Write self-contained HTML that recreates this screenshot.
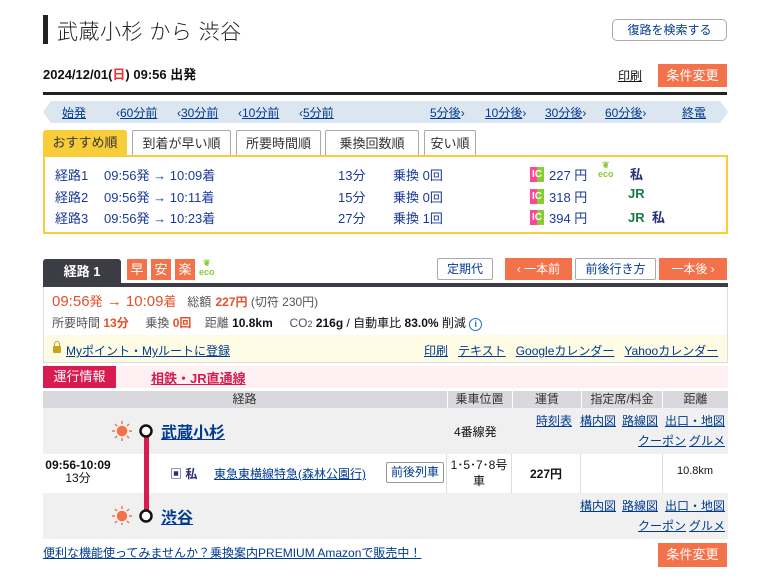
<!DOCTYPE html>
<html><head><meta charset="utf-8"><style>
*{margin:0;padding:0;box-sizing:border-box}
body{width:760px;height:584px;background:#fff;font-family:"Liberation Sans","Noto Sans CJK JP",sans-serif;font-size:12px;color:#333;position:relative;overflow:hidden}
.a{position:absolute;white-space:nowrap}
.l{color:#003b8f;text-decoration:underline}
.btn{position:absolute;border:1px solid #aaa;border-radius:2px;background:#fff;color:#003b8f;text-align:center;font-size:12px}
.ob{position:absolute;background:#f4724a;color:#fff;text-align:center;font-size:13px}
.b{color:#1a3a9a}
.n{position:absolute;top:104px;font-size:12px;color:#003b8f;white-space:nowrap}
.ic{width:14px;height:15px;background:linear-gradient(90deg,#f49 50%,#8c3 50%);color:#fff;font-size:10px;font-weight:bold;text-align:center;line-height:15px}
</style></head><body>
<div class="a" style="left:43px;top:15px;width:5px;height:29px;background:#222"></div>
<div class="a" style="left:57px;top:16px;font-size:21px;font-weight:300;color:#222;letter-spacing:0.5px">武蔵小杉 から 渋谷</div>
<div class="btn" style="left:612px;top:19px;width:115px;height:22px;line-height:20px;border-radius:5px">復路を検索する</div>
<div class="a" style="left:43px;top:64px;font-size:13px;font-weight:bold;color:#111">2024/12/01(<span style="color:#e33">日</span>) 09:56 出発</div>
<div class="a l" style="left:618px;top:67px;font-size:12px;color:#111">印刷</div>
<div class="ob" style="left:658px;top:64px;width:69px;height:23px;line-height:23px">条件変更</div>
<div class="a" style="left:43px;top:92px;width:684px;height:3px;background:#222"></div>
<svg class="a" style="left:43px;top:101px" width="685" height="22"><polygon points="8,0 677,0 685,11 677,22 8,22 0,11" fill="#dce6f0"/></svg>
<div class="n" style="left:62px"><span class="l">始発</span></div>
<div class="n" style="left:116px">‹<span class="l">60分前</span></div>
<div class="n" style="left:177px">‹<span class="l">30分前</span></div>
<div class="n" style="left:238px">‹<span class="l">10分前</span></div>
<div class="n" style="left:299px">‹<span class="l">5分前</span></div>
<div class="n" style="left:430px"><span class="l">5分後</span>›</div>
<div class="n" style="left:485px"><span class="l">10分後</span>›</div>
<div class="n" style="left:545px"><span class="l">30分後</span>›</div>
<div class="n" style="left:605px"><span class="l">60分後</span>›</div>
<div class="n" style="left:682px"><span class="l">終電</span></div>
<div class="a" style="left:43px;top:130px;width:84px;height:26px;background:#f9cc3a;border-radius:3px 3px 0 0;font-size:13px;line-height:26px;text-align:center;color:#333">おすすめ順</div>
<div class="btn" style="left:132px;top:130px;width:99px;height:26px;line-height:25px;font-size:13px;color:#333;border-bottom:none">到着が早い順</div>
<div class="btn" style="left:236px;top:130px;width:85px;height:26px;line-height:25px;font-size:13px;color:#333;border-bottom:none">所要時間順</div>
<div class="btn" style="left:325px;top:130px;width:94px;height:26px;line-height:25px;font-size:13px;color:#333;border-bottom:none">乗換回数順</div>
<div class="btn" style="left:424px;top:130px;width:52px;height:26px;line-height:25px;font-size:13px;color:#333;border-bottom:none">安い順</div>
<div class="a" style="left:43px;top:155px;width:685px;height:79px;border:2px solid #f9cc3a"></div>
<div class="a b" style="left:55px;top:165px;line-height:21.5px;font-size:13px">経路1<br>経路2<br>経路3</div>
<div class="a b" style="left:104px;top:165px;line-height:21.5px;font-size:13px">09:56発 → 10:09着<br>09:56発 → 10:11着<br>09:56発 → 10:23着</div>
<div class="a b" style="left:338px;top:165px;line-height:21.5px;font-size:13px">13分<br>15分<br>27分</div>
<div class="a b" style="left:393px;top:165px;line-height:21.5px;font-size:13px">乗換 0回<br>乗換 0回<br>乗換 1回</div>
<div class="a" style="left:530px;top:167px">
<div class="ic" style="margin:0 0 6.5px">IC</div><div class="ic" style="margin-bottom:6.5px">IC</div><div class="ic">IC</div></div>
<div class="a b" style="left:549px;top:165px;line-height:21.5px;font-size:13px">227 円<br>318 円<br>394 円</div>
<div class="a" style="left:598px;top:161px;font-size:9px;color:#8c3;font-weight:bold;line-height:9px;text-align:center">❦<br>eco</div>
<div class="a" style="left:630px;top:164px;font-weight:bold;font-size:13px;color:#2a2f7a">私</div>
<div class="a" style="left:628px;top:186px;font-weight:bold;font-size:13px;color:#1a7a4a">JR</div>
<div class="a" style="left:628px;top:207px;font-weight:bold;font-size:13px;color:#1a7a4a">JR <span style="color:#2a2f7a">&nbsp;私</span></div>
<div class="a" style="left:43px;top:259px;width:78px;height:26px;background:#3b3c44;color:#fff;font-weight:bold;font-size:13px;line-height:26px;text-align:center;border-radius:3px 3px 0 0">経路 1</div>
<div class="ob" style="left:127px;top:259px;width:20px;height:21px;line-height:21px">早</div>
<div class="ob" style="left:151px;top:259px;width:20px;height:21px;line-height:21px">安</div>
<div class="ob" style="left:175px;top:259px;width:20px;height:21px;line-height:21px">楽</div>
<div class="a" style="left:199px;top:259px;font-size:9px;color:#8c3;font-weight:bold;line-height:9px;text-align:center">❦<br>eco</div>
<div class="btn" style="left:437px;top:258px;width:56px;height:22px;line-height:20px">定期代</div>
<div class="ob" style="left:505px;top:258px;width:67px;height:22px;line-height:22px;font-size:12px">‹ 一本前</div>
<div class="btn" style="left:575px;top:258px;width:81px;height:22px;line-height:20px">前後行き方</div>
<div class="ob" style="left:659px;top:258px;width:68px;height:22px;line-height:22px;font-size:12px">一本後 ›</div>
<div class="a" style="left:43px;top:283px;width:685px;height:4px;background:#3b3c44"></div>
<div class="a" style="left:43px;top:287px;width:685px;height:76px;border:1px solid #ddd;border-top:none"></div>
<div class="a" style="left:52px;top:291px;font-size:15px;color:#e4502a">09:56<span style="font-size:13px">発</span> → 10:09<span style="font-size:13px">着</span> <span style="font-size:12px;color:#555">&nbsp;&nbsp;総額</span> <span style="font-size:12px;font-weight:bold">227円</span><span style="font-size:12px;color:#555"> (切符 230円)</span></div>
<div class="a" style="left:52px;top:314px;font-size:12px;color:#555">所要時間 <b style="color:#e4502a">13分</b>&nbsp;&nbsp;&nbsp;&nbsp;&nbsp;乗換 <b style="color:#e4502a">0回</b>&nbsp;&nbsp;&nbsp;&nbsp;距離 <b style="color:#111">10.8km</b>&nbsp;&nbsp;&nbsp;&nbsp;&nbsp;CO<span style="font-size:9px">2</span> <b style="color:#111">216g</b><span style="color:#111"> / 自動車比 <b>83.0%</b> 削減</span> <span style="display:inline-block;width:13px;height:13px;border:1.5px solid #2a6ac0;border-radius:50%;color:#2a6ac0;font-size:9px;line-height:10px;text-align:center;font-weight:bold">i</span></div>
<div class="a" style="left:44px;top:335px;width:683px;height:27px;background:#fdfbe4"></div>
<div class="a" style="left:53px;top:346px;width:8px;height:7px;background:#c9a21a;border-radius:1px"></div>
<div class="a" style="left:54px;top:341px;width:6px;height:7px;border:1.5px solid #c9a21a;border-radius:3px 3px 0 0"></div>
<div class="a" style="left:66px;top:342px;font-size:12px"><span class="l">Myポイント・Myルートに登録</span></div>
<div class="a" style="left:424px;top:342px;font-size:12px"><span class="l">印刷</span>&nbsp;&nbsp;&nbsp;<span class="l">テキスト</span>&nbsp;&nbsp;&nbsp;<span class="l">Googleカレンダー</span>&nbsp;&nbsp;&nbsp;<span class="l">Yahooカレンダー</span></div>
<div class="a" style="left:43px;top:366px;width:685px;height:22px;background:#fff1f3"></div>
<div class="a" style="left:43px;top:366px;width:73px;height:22px;background:#d81b50;color:#fff;font-size:13px;line-height:22px;text-align:center">運行情報</div>
<div class="a" style="left:151px;top:368px;font-size:13px;font-weight:bold;color:#d81b50;text-decoration:underline">相鉄・JR直通線</div>
<div class="a" style="left:43px;top:391px;width:685px;height:17px;background:#d9d9dd"></div>
<div class="a" style="left:43px;top:391px;width:403px;text-align:center;font-size:12px;line-height:17px">経路</div>
<div class="a" style="left:447px;top:391px;width:64px;text-align:center;line-height:17px;border-left:1px solid #fff">乗車位置</div>
<div class="a" style="left:512px;top:391px;width:69px;text-align:center;line-height:17px;border-left:1px solid #fff">運賃</div>
<div class="a" style="left:581px;top:391px;width:81px;text-align:center;line-height:17px;border-left:1px solid #fff">指定席/料金</div>
<div class="a" style="left:662px;top:391px;width:66px;text-align:center;line-height:17px;border-left:1px solid #fff">距離</div>
<div class="a" style="left:43px;top:408px;width:685px;height:46px;background:#f0f0f0"></div>
<div class="a" style="left:43px;top:493px;width:685px;height:46px;background:#f0f0f0"></div>
<div class="a" style="left:446px;top:454px;width:1px;height:39px;background:#ddd"></div>
<div class="a" style="left:511px;top:454px;width:1px;height:39px;background:#ddd"></div>
<div class="a" style="left:580px;top:454px;width:1px;height:39px;background:#ddd"></div>
<div class="a" style="left:662px;top:454px;width:1px;height:39px;background:#ddd"></div>
<div class="a" style="left:144px;top:430px;width:5px;height:86px;background:#d81b50"></div>
<svg class="a" style="left:110px;top:420px" width="45" height="105">
<g fill="#f4724a" stroke="#f4724a" stroke-width="1.5"><circle cx="12" cy="11" r="4.5"/><line x1="12" y1="1" x2="12" y2="4"/><line x1="12" y1="18" x2="12" y2="21"/><line x1="2" y1="11" x2="5" y2="11"/><line x1="19" y1="11" x2="22" y2="11"/><line x1="5" y1="4" x2="7" y2="6"/><line x1="17" y1="16" x2="19" y2="18"/><line x1="19" y1="4" x2="17" y2="6"/><line x1="5" y1="18" x2="7" y2="16"/></g>
<g transform="translate(0,85)" fill="#f4724a" stroke="#f4724a" stroke-width="1.5"><circle cx="12" cy="11" r="4.5"/><line x1="12" y1="1" x2="12" y2="4"/><line x1="12" y1="18" x2="12" y2="21"/><line x1="2" y1="11" x2="5" y2="11"/><line x1="19" y1="11" x2="22" y2="11"/><line x1="5" y1="4" x2="7" y2="6"/><line x1="17" y1="16" x2="19" y2="18"/><line x1="19" y1="4" x2="17" y2="6"/><line x1="5" y1="18" x2="7" y2="16"/></g>
<circle cx="36" cy="11" r="5.5" fill="#fff" stroke="#111" stroke-width="2.5"/><circle cx="36" cy="96" r="5.5" fill="#fff" stroke="#111" stroke-width="2.5"/></svg>
<div class="a" style="left:161px;top:419px;font-size:16px;font-weight:bold;color:#003b8f;text-decoration:underline">武蔵小杉</div>
<div class="a" style="left:161px;top:504px;font-size:16px;font-weight:bold;color:#003b8f;text-decoration:underline">渋谷</div>
<div class="a" style="left:454px;top:423px;font-size:12px;color:#111">4番線発</div>
<div class="a l" style="left:536px;top:412px">時刻表</div>
<div class="a l" style="left:580px;top:412px">構内図</div>
<div class="a l" style="left:622px;top:412px">路線図</div>
<div class="a l" style="left:665px;top:412px">出口・地図</div>
<div class="a l" style="left:638px;top:432px">クーポン</div>
<div class="a l" style="left:689px;top:432px">グルメ</div>
<div class="a l" style="left:580px;top:497px">構内図</div>
<div class="a l" style="left:622px;top:497px">路線図</div>
<div class="a l" style="left:665px;top:497px">出口・地図</div>
<div class="a l" style="left:638px;top:517px">クーポン</div>
<div class="a l" style="left:689px;top:517px">グルメ</div>
<div class="a" style="left:43px;top:459px;width:70px;text-align:center;font-size:12px;line-height:13px;color:#111"><b>09:56-10:09</b><br>13分</div>
<div class="a" style="left:170px;top:465px;font-size:12px;font-weight:bold;color:#2a2f7a">▣ 私</div>
<div class="a" style="left:214px;top:465px;font-size:12px"><span class="l">東急東横線特急(森林公園行)</span></div>
<div class="btn" style="left:386px;top:462px;width:58px;height:21px;line-height:19px;border-color:#999">前後列車</div>
<div class="a" style="left:447px;top:457px;width:64px;text-align:center;font-size:12px;line-height:16px;color:#111">1･5･7･8号<br>車</div>
<div class="a" style="left:512px;top:465px;width:68px;text-align:center;font-size:12px;font-weight:bold;color:#111">227円</div>
<div class="a" style="left:662px;top:465px;width:66px;text-align:center;font-size:11px;color:#111">10.8km</div>
<div class="a" style="left:43px;top:544px;font-size:12px"><span class="l">便利な機能使ってみませんか？乗換案内PREMIUM Amazonで販売中！</span></div>
<div class="ob" style="left:658px;top:543px;width:69px;height:24px;line-height:24px">条件変更</div>
</body></html>
